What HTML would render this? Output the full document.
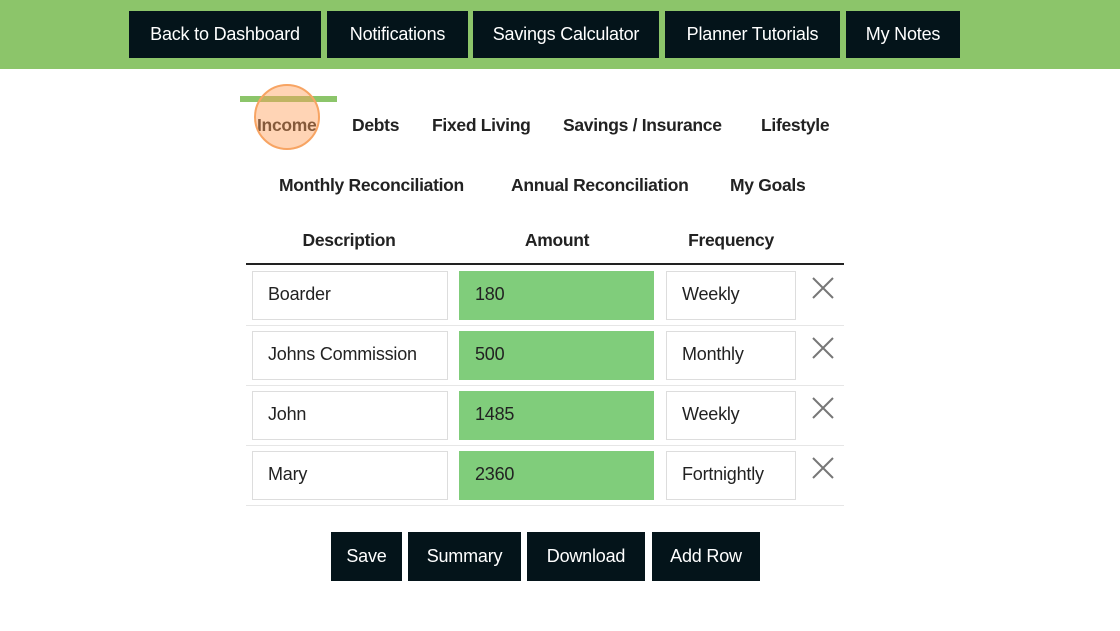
<!DOCTYPE html><html><head><style>
body{margin:0;width:1120px;height:631px;background:#fff;font-family:"Liberation Sans",sans-serif;position:relative;overflow:hidden}
.a{position:absolute}
.top{left:0;top:0;width:1120px;height:69px;background:#8cc56a}
.b{position:absolute;background:#04141a;color:#fff;font-size:18px;letter-spacing:-0.2px;display:flex;align-items:center;justify-content:center}
.t{position:absolute;font-weight:bold;font-size:17.5px;letter-spacing:-0.3px;color:#222;white-space:nowrap}
.h{position:absolute;font-weight:bold;font-size:17.5px;letter-spacing:-0.3px;color:#222;transform:translateX(-50%)}
.in{position:absolute;border:1px solid #ddd;box-sizing:border-box;height:49px;font-size:18px;letter-spacing:-0.2px;color:#222;padding-left:15px;line-height:44px;background:#fff}
.g{background:#80cd7b;border-color:#80cd7b}
.sep{position:absolute;left:246px;width:598px;height:1px;background:#e6e6e6}
.x{position:absolute;left:811px;width:24px;height:24px}
</style></head><body>
<div class="a top"></div>
<div class="b" style="left:129px;top:11px;width:192px;height:47px">Back to Dashboard</div>
<div class="b" style="left:327px;top:11px;width:141px;height:47px">Notifications</div>
<div class="b" style="left:473px;top:11px;width:186px;height:47px">Savings Calculator</div>
<div class="b" style="left:665px;top:11px;width:175px;height:47px">Planner Tutorials</div>
<div class="b" style="left:846px;top:11px;width:114px;height:47px">My Notes</div>
<div class="a" style="left:240px;top:96px;width:97px;height:6px;background:#8cc56a"></div>
<div class="t" style="left:257px;top:115px">Income</div>
<div class="a" style="left:254px;top:84px;width:66px;height:66px;border-radius:50%;background:rgba(255,160,90,.45);border:2px solid #f7a463;box-sizing:border-box"></div>
<div class="t" style="left:352px;top:115px">Debts</div>
<div class="t" style="left:432px;top:115px">Fixed Living</div>
<div class="t" style="left:563px;top:115px">Savings / Insurance</div>
<div class="t" style="left:761px;top:115px">Lifestyle</div>
<div class="t" style="left:279px;top:175px">Monthly Reconciliation</div>
<div class="t" style="left:511px;top:175px">Annual Reconciliation</div>
<div class="t" style="left:730px;top:175px">My Goals</div>
<div class="h" style="left:349px;top:230px">Description</div>
<div class="h" style="left:557px;top:230px">Amount</div>
<div class="h" style="left:731px;top:230px">Frequency</div>
<div class="a" style="left:246px;top:263px;width:598px;height:2px;background:#222"></div>

<div class="in" style="left:252px;top:271px;width:196px">Boarder</div>
<div class="in g" style="left:459px;top:271px;width:195px">180</div>
<div class="in" style="left:666px;top:271px;width:130px">Weekly</div>
<div class="sep" style="top:325px"></div>
<div class="in" style="left:252px;top:331px;width:196px">Johns Commission</div>
<div class="in g" style="left:459px;top:331px;width:195px">500</div>
<div class="in" style="left:666px;top:331px;width:130px">Monthly</div>
<div class="sep" style="top:385px"></div>
<div class="in" style="left:252px;top:391px;width:196px">John</div>
<div class="in g" style="left:459px;top:391px;width:195px">1485</div>
<div class="in" style="left:666px;top:391px;width:130px">Weekly</div>
<div class="sep" style="top:445px"></div>
<div class="in" style="left:252px;top:451px;width:196px">Mary</div>
<div class="in g" style="left:459px;top:451px;width:195px">2360</div>
<div class="in" style="left:666px;top:451px;width:130px">Fortnightly</div>
<div class="sep" style="top:505px"></div>

<svg class="x" style="top:276px" viewBox="0 0 24 24"><path d="M2 2L22 22M22 2L2 22" stroke="#777" stroke-width="2"/></svg>
<svg class="x" style="top:336px" viewBox="0 0 24 24"><path d="M2 2L22 22M22 2L2 22" stroke="#777" stroke-width="2"/></svg>
<svg class="x" style="top:396px" viewBox="0 0 24 24"><path d="M2 2L22 22M22 2L2 22" stroke="#777" stroke-width="2"/></svg>
<svg class="x" style="top:456px" viewBox="0 0 24 24"><path d="M2 2L22 22M22 2L2 22" stroke="#777" stroke-width="2"/></svg>

<div class="b" style="left:331px;top:532px;width:71px;height:49px">Save</div>
<div class="b" style="left:408px;top:532px;width:113px;height:49px">Summary</div>
<div class="b" style="left:527px;top:532px;width:118px;height:49px">Download</div>
<div class="b" style="left:652px;top:532px;width:108px;height:49px">Add Row</div>
</body></html>
